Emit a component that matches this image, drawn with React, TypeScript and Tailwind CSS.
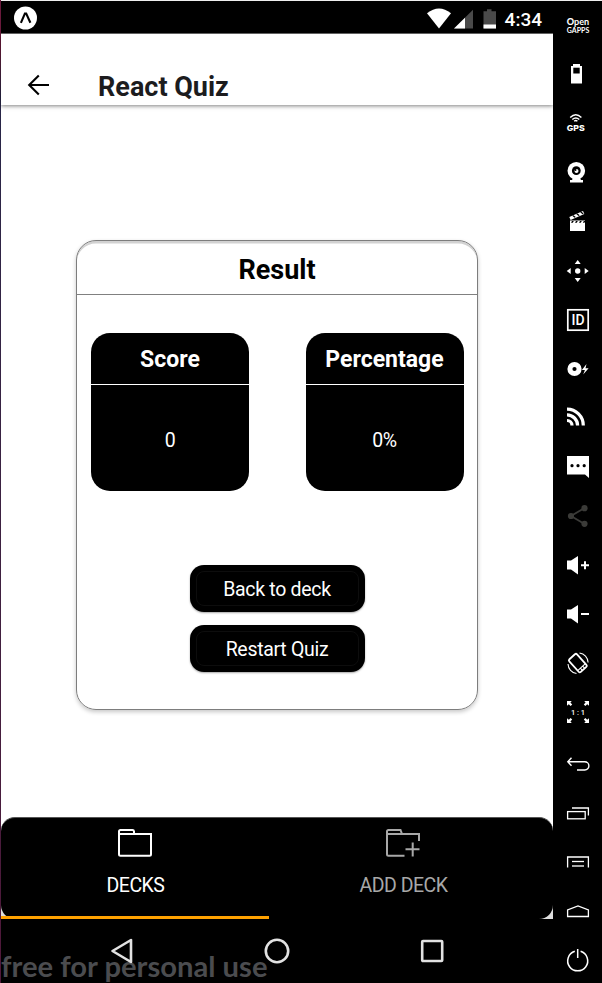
import type { ReactNode } from "react";

const TRIANGLES = "M12.7 1l3 4h-6zM12.7 23l3-4h-6zM1.7 12l4-3v6zM23.7 12l-4-3v6z";

type Tool = { name: string; tall?: boolean; art: ReactNode };

const tools: Tool[] = [
  {
    name: "Open GApps",
    art: (
      <g fill="#fff" textAnchor="middle" className="font-['Lato',sans-serif]">
        <text x="13" y="12" fontSize="9" fontWeight="700" textLength="22.500" lengthAdjust="spacingAndGlyphs">
          <tspan fontWeight="900">O</tspan>pen
        </text>
        <text x="13" y="19.7" fontSize="7" fontWeight="700" textLength="22.500" lengthAdjust="spacingAndGlyphs">GAPPS</text>
      </g>
    ),
  },
  {
    name: "Battery",
    art: (
      <>
        <path d="M8 2h7v2h2v17.5H6V4h2z" fill="#fff" />
        <rect x="8.3" y="5.7" width="6.4" height="5.8" fill="#000" />
      </>
    ),
  },
  {
    name: "GPS",
    tall: true,
    art: (
      <>
        <g fill="none" stroke="#fff" strokeWidth="1.4">
          <path d="M5.2 6.6q5.6-5.6 11.2 0" />
          <path d="M7.3 8.5q3.5-3.2 7 0" />
          <path d="M9.2 10.2q1.6-1.3 3.2 0" />
        </g>
        <text x="10.8" y="19.6" fontSize="8" fontWeight="800" fill="#fff" textAnchor="middle" textLength="18" lengthAdjust="spacingAndGlyphs" className="font-['Inter',sans-serif]">
          GPS
        </text>
      </>
    ),
  },
  {
    name: "Camera",
    art: (
      <>
        <circle cx="11.3" cy="9.7" r="8.8" fill="#fff" />
        <path d="M8 17h7l1 2h2v2.6H5V19h2z" fill="#fff" />
        <circle cx="11.3" cy="9.7" r="4.4" fill="#000" />
        <circle cx="11.5" cy="9.9" r="2" fill="#fff" />
        <circle cx="10.6" cy="9" r="0.9" fill="#000" />
      </>
    ),
  },
  {
    name: "Capture",
    art: (
      <>
        <path d="M5 10.500h15V21H5z" fill="#fff" />
        <path d="M7 11h1.800l-1 1.800H6zM11 11h1.800l-1 1.800H10zM15 11h1.800l-1 1.800H14zM18.800 11H20v1l-.6.8H17.900z" fill="#000" />
        <path d="M4.3 7L18 1l1.300 2.900L5.600 9.900z" fill="#fff" />
        <path d="M7.200 5.800l2.300 1.900 1.300-.6L8.500 5.200zM11.200 4l2.300 1.900 1.300-.6-2.300-1.900zM15.200 2.300l2.300 1.900 1.200-.6-2.200-1.900z" fill="#000" />
      </>
    ),
  },
  {
    name: "Move",
    art: (
      <g fill="#fff">
        <circle cx="12.7" cy="12" r="2.7" />
        <path d={TRIANGLES} />
      </g>
    ),
  },
  {
    name: "Identifiers",
    art: (
      <>
        <rect x="2.8" y="1.8" width="20.4" height="20.4" fill="none" stroke="#fff" strokeWidth="1.7" />
        <text x="13" y="17" fontSize="14" fontWeight="500" fill="#fff" textAnchor="middle" className="font-['Roboto',sans-serif]">
          ID
        </text>
      </>
    ),
  },
  {
    name: "Disk IO",
    tall: true,
    art: (
      <>
        <circle cx="9.5" cy="12" r="4.6" fill="none" stroke="#fff" strokeWidth="5" />
        <path d="M21.5 7l-4.6 6h3l-1.7 4.6 5.4-6.4h-3.1z" fill="#fff" />
      </>
    ),
  },
  {
    name: "Network",
    art: (
      <g fill="none" stroke="#fff" strokeWidth="3.200">
        <path d="M2 2.2a16.300 16.300 0 0 1 16.300 16.300" />
        <path d="M2 7.9A10.600 10.600 0 0 1 12.600 18.500" />
        <path d="M2 13.500a5 5 0 0 1 5 5" />
      </g>
    ),
  },
  {
    name: "Messages",
    art: (
      <>
        <path d="M2 0h22v22l-4-3.4H2z" fill="#fff" />
        <g fill="#000">
          <circle cx="7" cy="9.7" r="1.6" />
          <circle cx="13" cy="9.7" r="1.6" />
          <circle cx="19.2" cy="9.7" r="1.6" />
        </g>
      </>
    ),
  },
  {
    name: "Share",
    art: (
      <g fill="#3b3b38">
        <path d="M19.5 3L6 11l13.5 8" fill="none" stroke="#3b3b38" strokeWidth="1.8" />
        <circle cx="19.5" cy="3.2" r="3.100" />
        <circle cx="6" cy="11" r="3.100" />
        <circle cx="19.5" cy="18.8" r="3.100" />
      </g>
    ),
  },
  {
    name: "Volume up",
    art: (
      <>
        <path d="M2 6.5h4L13 2v18.5L6 15.5H2z" fill="#fff" />
        <path d="M16 11.3h8M20 7.3v8" stroke="#fff" strokeWidth="2" />
      </>
    ),
  },
  {
    name: "Volume down",
    tall: true,
    art: (
      <>
        <path d="M2 6.5h4L13 2v18.5L6 15.5H2z" fill="#fff" />
        <path d="M16 11h8" stroke="#fff" strokeWidth="2" />
      </>
    ),
  },
  {
    name: "Rotate",
    art: (
      <g fill="none" stroke="#fff">
        <g transform="rotate(-42 12.8 10)">
          <rect x="7.6" y="1.6" width="10.4" height="17" rx="1.5" strokeWidth="1.8" />
          <path d="M8 15.6h9.6M11.2 15.6v3M14.4 15.6v3" strokeWidth="1.1" />
        </g>
        <path d="M14.5 0a10 10 0 0 1 8.6 9.5M11.5 20.5A10 10 0 0 1 3 11" strokeWidth="1.1" />
      </g>
    ),
  },
  {
    name: "Pixel perfect",
    art: (
      <>
        <path
          d="M2-1h4.800L5.400.600 7.200 2.400 5.600 4 3.800 2.200 2 3.800zM24-1v4.800L22.200 2.200 20.400 4l-1.600-1.600L20.600.600 19.200-1zM2 21v-4.800l1.800 1.600L5.600 16l1.600 1.600-1.800 1.800L6.800 21zM24 21h-4.800l1.400-1.600-1.800-1.800 1.600-1.600 1.800 1.800 1.800-1.600z"
          fill="#fff"
        />
        <text x="13" y="13" fontSize="7.5" fontWeight="500" fill="#fff" textAnchor="middle" textLength="14" className="font-['Roboto',sans-serif]">
          1:1
        </text>
      </>
    ),
  },
  {
    name: "Back",
    art: <path d="M6.5 6.8L2.8 10.8l3.7 4M2.8 10.8h17a4.1 4.1 0 0 1 0 8.2H12" fill="none" stroke="#fff" strokeWidth="1.4" />,
  },
  {
    name: "Recents",
    art: (
      <g fill="none" stroke="#fff" strokeWidth="1.3">
        <rect x="2.6" y="11.6" width="17.6" height="7.2" />
        <path d="M7 8h16.4v7.4" />
      </g>
    ),
  },
  {
    name: "Menu",
    tall: true,
    art: (
      <g fill="none" stroke="#fff" strokeWidth="1.3">
        <path d="M2.6 18.6V8h20.8v10.6" />
        <path d="M7 12.5h12" />
        <path d="M7 17h12" stroke="#bbb" strokeWidth="1.8" />
      </g>
    ),
  },
  {
    name: "Home",
    art: <path d="M2.6 17.5v-6.6L13 7l10.4 3.9v6.6z" fill="none" stroke="#fff" strokeWidth="1.3" />,
  },
  {
    name: "Power",
    art: <path d="M9.8 3.3a10 10 0 1 0 5.8 0M12.7 1v9" fill="none" stroke="#fff" strokeWidth="1.5" />,
  },
];

function EmulatorToolbar() {
  return (
    <aside className="flex h-full w-[49px] shrink-0 flex-col items-center overflow-hidden bg-black">
      {tools.map((tool) => (
        <button
          key={tool.name}
          aria-label={tool.name}
          className={`flex w-[49px] shrink-0 justify-center pt-3 ${tool.tall ? "h-[50px]" : "h-[49px]"}`}
        >
          <svg width="25" height="25" viewBox="0 0 25 25" className="overflow-visible">
            {tool.art}
          </svg>
        </button>
      ))}
    </aside>
  );
}

function StatusBar() {
  return (
    <div className="flex h-[33px] shrink-0 items-start justify-between border-b border-[#6f6f6f] bg-black pl-[13px] pr-[11px]">
      <svg width="24" height="24" viewBox="0 0 24 24" className="mt-[5px]">
        <circle cx="11.500" cy="12" r="11.5" fill="#fff" />
        <path d="M6.900 16.8l4-9.2h1.3l4.2 9.2" fill="none" stroke="#000" strokeWidth="2.1" />
      </svg>
      <div className="flex">
        <svg width="74" height="24" viewBox="0 0 74 24" className="mt-[5px]">
          <path d="M0 7.2Q12-2.3 24 7.2L12 22.4z" fill="#fff" />
          <path d="M46 3.8v18.7H27z" fill="#4a4a4a" />
          <path d="M38 11.7v10.8H27z" fill="#fff" />
          <path d="M60 3.2h4.5v2H69v17.3H56.500V5.200H60z" fill="#4a4a4a" />
          <path d="M56.500 18.500H69v4H56.500z" fill="#fff" />
        </svg>
        <span className="ml-[4px] mt-[4px] text-[19px] font-medium leading-[29px] text-white">4:34</span>
      </div>
    </div>
  );
}

function StatCard({ label, value }: { label: string; value: string }) {
  return (
    <div className="flex h-[158px] w-[158px] flex-col overflow-hidden rounded-[19px] bg-black text-center text-white">
      <div className="h-[52px] border-b border-white text-[23px] font-bold leading-[53px]">{label}</div>
      <div className="flex-1 pt-[2px] text-[19.500px] leading-[108px] tracking-[-0.4px]">{value}</div>
    </div>
  );
}

function ActionButton({ children }: { children: ReactNode }) {
  return (
    <button className="h-[47px] w-[175px] rounded-[14px] bg-black p-[6px] text-[19.500px] tracking-[-0.300px] text-white shadow-[0_1px_2px_rgba(0,0,0,0.35)]">
      <span className="flex h-full items-center justify-center rounded-[8px] border border-[#0d0d0d] pt-[3px]">{children}</span>
    </button>
  );
}

function FolderIcon({ add }: { add?: boolean }) {
  return (
    <svg width="36" height="30" viewBox="0 0 36 30" fill="none" stroke={add ? "#a8a8a8" : "#fff"} strokeWidth="2">
      {add ? (
        <>
          <path d="M19.500 27.700H3.500Q2 27.700 2 26.200V3.500Q2 2 3.500 2h12l1.500 4h17v7" />
          <path d="M2 6h15M20.500 21.300h14M27.700 14.500v14" />
        </>
      ) : (
        <path d="M2 6h32v20.200q0 1.500-1.500 1.500h-29Q2 27.700 2 26.200V3.500Q2 2 3.500 2h12Q16.800 2 17 3.500V6" />
      )}
    </svg>
  );
}

export default function App() {
  return (
    <div className="relative flex h-[983px] w-[602px] overflow-hidden bg-black font-['Roboto',sans-serif]">
      <div className="w-px shrink-0 bg-linear-to-b from-[#6a1a3c] from-5% via-[#272547] via-10% to-[#50183a]" />
      <div className="flex min-w-0 flex-1 flex-col">
        <div className="h-px shrink-0 bg-[#eeeeee]" />
        <div className="flex min-h-0 flex-1">
          <main className="flex w-[552px] shrink-0 flex-col bg-white">
            <StatusBar />
            <header className="z-10 flex h-[71px] shrink-0 items-end bg-white pl-[25px] shadow-[0_1px_4px_rgba(0,0,0,0.5)]">
              <svg width="24" height="24" viewBox="0 0 24 24" fill="none" stroke="#000" strokeWidth="2.1" className="mb-[8px]">
                <path d="M12.800 2.500L3.200 12l9.600 9.500M3 12h20" />
              </svg>
              <h1 className="mb-[2px] ml-[48px] text-[27px] font-bold leading-[32px] text-[#1c1c1e]">React Quiz</h1>
            </header>
            <div className="flex flex-1 flex-col pl-[75px] pt-[135px]">
              <section className="flex h-[470px] w-[402px] flex-col rounded-[20px] border-[1.5px] border-[#7d7d7d] shadow-[0_2px_4px_rgba(0,0,0,0.22),inset_0_3px_0_-0.5px_#d2d2d2]">
                <h2 className="h-[54px] shrink-0 border-b border-[#808080] text-center text-[27px] font-bold leading-[58px] text-black">Result</h2>
                <div className="mt-[38px] flex justify-between pl-[14px] pr-[13.500px]">
                  <StatCard label="Score" value="0" />
                  <StatCard label="Percentage" value="0%" />
                </div>
                <div className="mt-[74px] flex flex-col items-center gap-[13px]">
                  <ActionButton>Back to deck</ActionButton>
                  <ActionButton>Restart Quiz</ActionButton>
                </div>
              </section>
            </div>
            <div className="h-[102px] shrink-0 bg-linear-to-b from-white from-50% to-[#dedede] to-50%">
              <nav className="flex h-full rounded-[14px] border-t border-[#555] bg-black text-[19.500px] tracking-[-0.500px]">
                <div className="flex w-[268px] flex-col items-center border-b-[3px] border-[#ffa200] pt-[10px] text-white">
                  <FolderIcon />
                  <span className="ml-[1px] mt-[13px] leading-[29px]">DECKS</span>
                </div>
                <div className="flex w-[268px] flex-col items-center pt-[10px] text-[#a8a8a8]">
                  <FolderIcon add />
                  <span className="ml-[1px] mt-[13px] leading-[29px]">ADD DECK</span>
                </div>
              </nav>
            </div>
            <div className="relative h-[64px] shrink-0 bg-black">
              <p className="absolute left-0 top-[30px] whitespace-nowrap font-['Lato',sans-serif] text-[29.200px] font-bold leading-[34px] text-[#4b4c4f]">
                free for personal use
              </p>
              <div className="relative flex justify-between pl-[109px] pr-[109px] pt-[17px]">
                <svg width="26" height="30" viewBox="0 0 26 30" fill="none" stroke="#e2e2e2" strokeWidth="2.6">
                  <path d="M2.500 15L21 4v22z" strokeLinejoin="round" />
                </svg>
                <svg width="28" height="30" viewBox="0 0 28 30" fill="none" stroke="#e2e2e2" strokeWidth="2.600">
                  <circle cx="13" cy="15" r="11.200" />
                </svg>
                <svg width="24" height="30" viewBox="0 0 24 30" fill="none" stroke="#e2e2e2" strokeWidth="2.600">
                  <rect x="2.200" y="5" width="20" height="20" rx="0.800" />
                </svg>
              </div>
            </div>
          </main>
          <EmulatorToolbar />
        </div>
      </div>
    </div>
  );
}
